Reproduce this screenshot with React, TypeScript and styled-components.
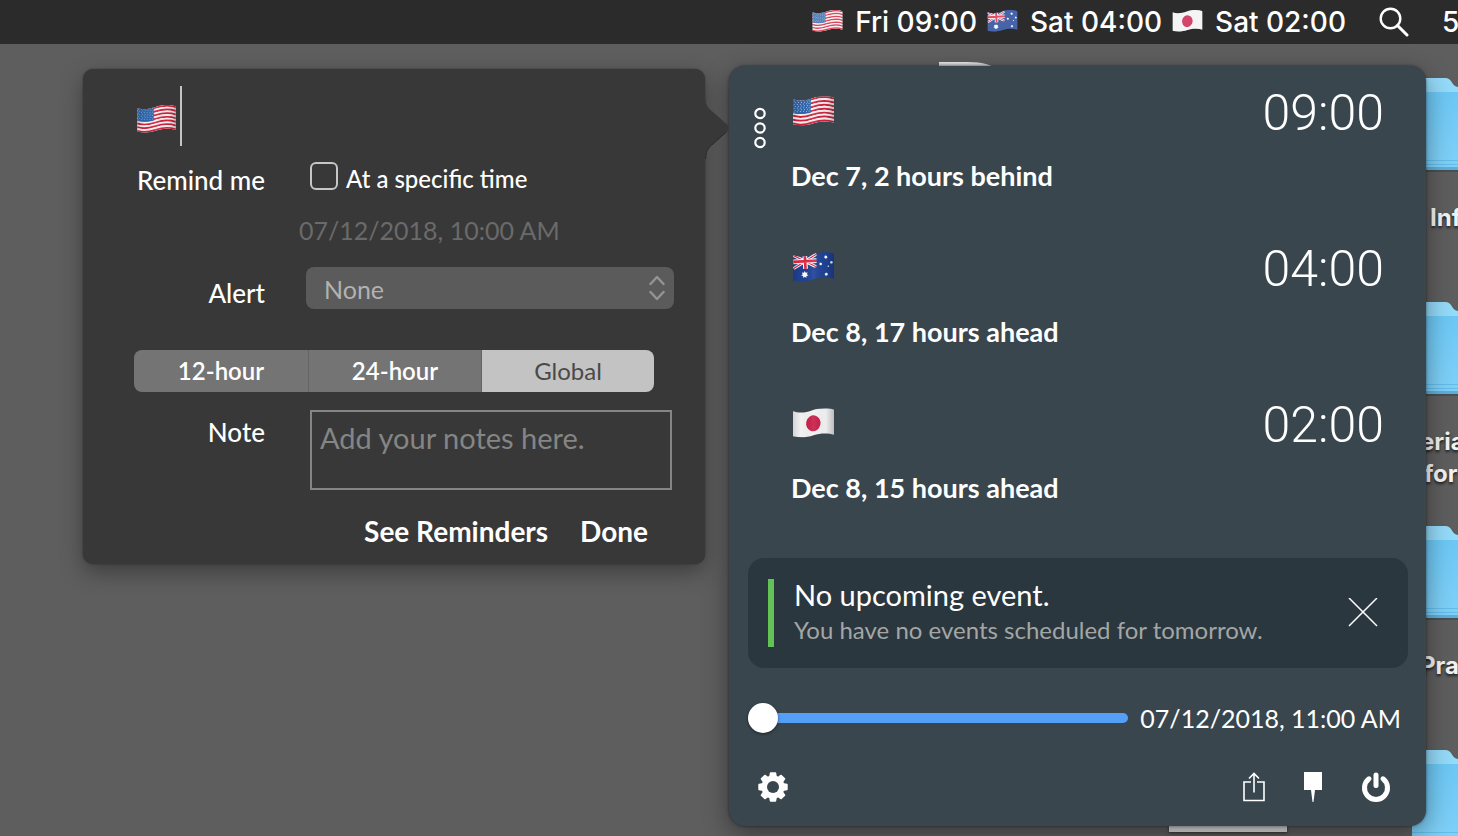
import React, { useId, useState } from "react";
import styled, { createGlobalStyle } from "styled-components";

const GlobalStyle = createGlobalStyle`
  *, *::before, *::after { box-sizing: border-box; }
  body {
    margin: 0;
    overflow: hidden;
    background: #5e5e5e;
    color: #fff;
    font-family: Lato, "Noto Sans", sans-serif;
    font-size: 25px;
    line-height: 32px;
  }
  button, input, select, textarea { font: inherit; color: inherit; }
`;

const Page = styled.div`
  position: relative;
  min-height: 100vh;
  overflow: hidden;
  background: #5e5e5e;
`;

/* Menu bar */

const MenuBar = styled.header`
  position: relative;
  display: flex;
  justify-content: flex-end;
  align-items: center;
  height: 44px;
  background: #2b2b2b;
  font-family: Inter, "Liberation Sans", sans-serif;
  font-size: 28px;
  font-weight: 500;
  white-space: nowrap;
`;

const MenuClock = styled.span`
  display: flex;
  align-items: center;
  gap: 12px;
  margin-right: 10px;
  svg { margin-bottom: 3px; }
`;

const SearchButton = styled.button`
  display: flex;
  margin: 0 33px 0 23px;
  padding: 0;
  border: 0;
  background: none;
`;

const MenuCut = styled.span`
  width: 16px;
  overflow: hidden;
`;

/* Desktop */

const Desktop = styled.div`
  position: absolute;
  inset: 0;
`;

const DesktopFolder = styled.div<{ $top: number }>`
  position: absolute;
  top: ${(p) => p.$top}px;
  left: calc(100% - 46px);
  svg { display: block; }
`;

const DesktopLabel = styled.span<{ $top: number; $right: number }>`
  position: absolute;
  top: ${(p) => p.$top}px;
  left: calc(100% - ${(p) => p.$right}px);
  font-family: Inter, "Noto Sans", sans-serif;
  font-size: 24px;
  font-weight: 700;
  color: #f2f2f2;
  text-shadow: 0 2px 3px rgba(0, 0, 0, 0.7);
`;

const PaperTop = styled.div`
  position: absolute;
  top: 62px;
  left: calc(100% - 519px);
  width: 56px;
  height: 12px;
  border-radius: 0 28px 0 0 / 0 8px 0 0;
  background: linear-gradient(#eee, #bbb 5px);
`;

const PaperBottom = styled.div`
  position: absolute;
  top: 800px;
  left: calc(100% - 289px);
  width: 118px;
  height: 32px;
  background: #dcdcdc;
  box-shadow: 0 1px 3px rgba(0, 0, 0, 0.5);
`;

const Windows = styled.main`
  position: relative;
  display: flex;
  justify-content: flex-end;
  align-items: flex-start;
  gap: 24px;
  padding: 22px 32px 10px;
`;

/* Reminder popover */

const Popover = styled.form`
  position: relative;
  z-index: 1;
  flex: 0 1 622px;
  display: flex;
  flex-direction: column;
  margin-top: 3px;
  padding: 17px 31px 13px 51px;
  border-radius: 10px;
  background: #383838;
  box-shadow: 0 0 2px rgba(0, 0, 0, 0.4), 0 8px 22px rgba(0, 0, 0, 0.35);
`;

const PopoverArrow = styled.svg`
  position: absolute;
  top: 28px;
  left: 100%;
`;

const TitleRow = styled.label`
  display: flex;
  align-items: center;
  height: 60px;
  padding: 6px 0 0 3px;
`;

const Caret = styled.span`
  align-self: stretch;
  width: 2px;
  margin: -6px 0 0 4px;
  background: #c4c4c4;
`;

const TitleInput = styled.input`
  flex: 1;
  min-width: 0;
  border: 0;
  outline: 0;
  background: none;
`;

const Row = styled.div<{ $top: number }>`
  display: flex;
  gap: 41px;
  margin-top: ${(p) => p.$top}px;
`;

const RowLabel = styled.label<{ $pad?: number }>`
  flex: 0 0 131px;
  padding-top: ${(p) => p.$pad ?? 0}px;
  font-size: 26px;
  font-weight: 500;
  text-align: right;
  white-space: nowrap;
`;

const CheckLabel = styled.label`
  display: flex;
  align-items: center;
  gap: 8px;
  padding-left: 4px;
  font-size: 24px;
  font-weight: 500;
  white-space: nowrap;
`;

const Checkbox = styled.input`
  appearance: none;
  width: 28px;
  height: 28px;
  margin: 0 0 6px;
  border: 2px solid #c6c6c6;
  border-radius: 6px;
`;

const DateText = styled.time`
  margin: 18px 0 0 165px;
  color: #6a6a6a;
`;

const SelectBox = styled.div`
  position: relative;
  flex: 1;
  svg { position: absolute; right: 9px; top: 8px; pointer-events: none; }
`;

const Select = styled.select`
  appearance: none;
  display: block;
  width: 100%;
  height: 42px;
  padding: 2px 18px 0;
  border: 0;
  border-radius: 8px;
  background: #5b5b5b;
  color: #b2b2b2;
`;

const Segments = styled.div`
  display: grid;
  grid-template-columns: 175px 173px 172px;
  width: 520px;
  margin-top: 41px;
  border-radius: 8px;
  overflow: hidden;
`;

const Segment = styled.button<{ $on: boolean }>`
  height: 42px;
  padding: 0;
  border: 0;
  border-right: ${(p) => (p.$on ? "0" : "1px solid #646464")};
  background: ${(p) => (p.$on ? "#c3c3c3" : "#747474")};
  color: ${(p) => (p.$on ? "#4a4a4a" : "#fff")};
  font-size: 24px;
  font-weight: ${(p) => (p.$on ? 400 : 600)};
`;

const Notes = styled.textarea`
  flex: 1;
  min-width: 0;
  height: 80px;
  margin: 0 2px 0 4px;
  padding: 10px 8px;
  border: 2px solid #858585;
  background: none;
  resize: none;
  outline: 0;
  font-size: 29px;
  &::placeholder { color: #858585; opacity: 1; }
`;

const Actions = styled.div`
  display: flex;
  justify-content: flex-end;
  gap: 32px;
  margin-top: 21px;
  padding-right: 26px;
`;

const TextButton = styled.button`
  height: 40px;
  padding: 0;
  border: 0;
  background: none;
  font-size: 28px;
  font-weight: 700;
  white-space: nowrap;
`;

/* World clock panel */

const Panel = styled.section`
  flex: 0 1 697px;
  display: flex;
  flex-direction: column;
  border-radius: 16px;
  background: #39464e;
  box-shadow: 0 0 3px rgba(0, 0, 0, 0.5), 0 8px 26px rgba(0, 0, 0, 0.4);
`;

const ClockRow = styled.article`
  display: flex;
  height: 156px;
  padding-right: 42px;
`;

const HandleSlot = styled.div`
  flex: 0 0 62px;
  padding: 41px 0 0 24px;
`;

const IconButton = styled.button`
  display: flex;
  padding: 0;
  border: 0;
  background: none;
`;

const ClockBody = styled.div`
  flex: 1;
`;

const ClockHead = styled.div`
  display: flex;
  justify-content: space-between;
  align-items: center;
  height: 94px;
  padding-left: 2px;
  svg { margin-bottom: 4px; }
`;

const BigTime = styled.time`
  font-family: Roboto, "Open Sans", sans-serif;
  font-size: 50px;
  font-weight: 300;
  line-height: 60px;
`;

const Offset = styled.p`
  margin: 0;
  font-size: 27px;
  font-weight: 700;
`;

const EventCard = styled.section`
  display: flex;
  align-items: center;
  margin: 24px 18px 0 19px;
  height: 110px;
  padding: 0 30px 0 20px;
  border-radius: 16px;
  background: #2b373e;
`;

const EventBar = styled.span`
  width: 6px;
  height: 68px;
  margin-right: 20px;
  background: #63c255;
`;

const EventText = styled.div`
  flex: 1;
  padding-bottom: 4px;
`;

const EventTitle = styled.h2`
  margin: 0;
  font-size: 29px;
  font-weight: 400;
  line-height: 38px;
`;

const EventNote = styled.p`
  margin: 0;
  color: #a3a6a5;
  font-size: 24px;
`;

const SliderRow = styled.div`
  display: flex;
  align-items: center;
  justify-content: space-between;
  gap: 10px;
  height: 40px;
  margin: 30px 25px 0 19px;
  white-space: nowrap;
`;

const Slider = styled.input`
  appearance: none;
  flex: 0 1 380px;
  height: 30px;
  margin: 0;
  background: none;
  &::-webkit-slider-runnable-track {
    height: 10px;
    border-radius: 5px;
    background: #559ff6;
  }
  &::-webkit-slider-thumb {
    appearance: none;
    width: 30px;
    height: 30px;
    margin-top: -10px;
    border-radius: 50%;
    background: #fff;
    box-shadow: 0 1px 3px rgba(0, 0, 0, 0.5);
  }
`;

const Toolbar = styled.footer`
  display: flex;
  align-items: center;
  justify-content: space-between;
  height: 42px;
  margin: 28px 35px 18px 29px;
`;

const ToolGroup = styled.div`
  display: flex;
  align-items: center;
  gap: 38px;
`;

/* Drawings */

type Country = "us" | "au" | "jp";

const WAVE = "C7 5.5 13 4 19 2 C26 -0.3 34 -0.6 40 1.5";

function Stars({ points }: { points: [number, number, number][] }) {
  return (
    <>
      {points.map(([x, y, r]) => (
        <path
          key={`${x}-${y}`}
          fill="#fff"
          transform={`translate(${x} ${y}) scale(${r})`}
          d="M0-1 .25-.5.8-.62.55-.12 1 .22.45.35.43.9 0 .55-.43.9-.45.35-1 .22-.55-.12-.8-.62-.25-.5Z"
        />
      ))}
    </>
  );
}

function Flag({ country, width = 41, faded = false }: { country: Country; width?: number; faded?: boolean }) {
  const id = useId().replace(/[^a-zA-Z0-9]/g, "");
  const stripes = Array.from({ length: 13 }, (_, i) => i);
  return (
    <svg
      width={width}
      height={Math.round(width * 0.72)}
      viewBox="0 0 40 29"
      role="img"
      aria-label={country}
    >
      <defs>
        <clipPath id={`c${id}`}>
          <path d={`M0 3 ${WAVE} V26 C34 24 26 24.5 20 26.5 C13 28.8 7 29 0 27.5Z`} />
        </clipPath>
        <linearGradient id={`g${id}`}>
          <stop offset="0" stopColor="#000" stopOpacity=".12" />
          <stop offset=".2" stopColor="#000" stopOpacity="0" />
          <stop offset=".5" stopColor="#fff" stopOpacity=".08" />
          <stop offset=".8" stopColor="#000" stopOpacity=".02" />
          <stop offset="1" stopColor="#000" stopOpacity=".22" />
        </linearGradient>
      </defs>
      <g clipPath={`url(#c${id})`}>
        {country === "us" && (
          <>
            <rect width="40" height="29" fill="#f4f1f2" />
            {stripes.map((i) => (
              <path
                key={i}
                d={`M0 3 ${WAVE}`}
                transform={`translate(0 ${0.95 + i * 1.9})`}
                fill="none"
                stroke={i % 2 ? "#f4f1f2" : "#d3213c"}
                strokeWidth="1.95"
              />
            ))}
            <path d="M0 0 H17.5 V16 C12 17.6 7 18 0 16.6Z" fill="#2f66ab" />
            {stripes.slice(0, 7).map((r) =>
              [1.5, 4.5, 7.5, 10.5, 13.5, 16].map((x) => (
                <circle
                  key={`${r}-${x}`}
                  cx={x + (r % 2 ? 0.7 : -0.3)}
                  cy={4.8 + r * 1.8 - x * 0.07}
                  r=".5"
                  fill="#b9d0ea"
                />
              )),
            )}
          </>
        )}
        {country === "au" && (
          <>
            <rect width="40" height="29" fill="#1e4294" />
            <g transform="translate(0 3) rotate(-3)">
              <path d="M0 0 23 13M23 0 0 13" stroke="#fff" strokeWidth="3" />
              <path d="M0 0 23 13M23 0 0 13" stroke="#dc2a45" strokeWidth="1.2" />
              <path d="M11.5-2V14M0 6.5H23" stroke="#fff" strokeWidth="4.6" />
              <path d="M11.5-2V14M0 6.5H23" stroke="#dc2a45" strokeWidth="2.6" />
            </g>
            <path d="M23 0H40V29H0V17.5C8 19 15 17 23 14.5Z" fill="#1e4294" />
            <Stars
              points={[
                [11.5, 22, 3.6],
                [32, 4.8, 1.9],
                [27, 11.5, 1.7],
                [37.5, 10, 1.7],
                [34.5, 13.7, 1],
                [32.5, 21.5, 1.9],
              ]}
            />
          </>
        )}
        {country === "jp" && (
          <>
            <rect width="40" height="29" fill="#f3f2f2" />
            <ellipse cx="19.8" cy="14.8" rx="7" ry="7.8" fill="#c91f49" transform="rotate(12 19.8 14.8)" />
          </>
        )}
        <rect width="40" height="29" fill={faded ? "rgba(255,255,255,.18)" : `url(#g${id})`} />
      </g>
    </svg>
  );
}

function Folder() {
  const id = useId().replace(/[^a-zA-Z0-9]/g, "");
  return (
    <svg width="128" height="96" viewBox="0 0 128 96" aria-hidden="true">
      <defs>
        <linearGradient id={id} x1="0" y1="0" x2="0" y2="1">
          <stop offset="0" stopColor="#6cc7f4" />
          <stop offset="1" stopColor="#80d1f8" />
        </linearGradient>
      </defs>
      <path d="M3 0H34C40 0 40 9 46 9H122Q126 9 126 12V92H0V4Q0 0 3 0Z" fill="#94daf9" />
      <path d="M0 14H126V92H0Z" fill={`url(#${id})`} />
      <path d="M0 82.500H126M0 86.500H126" stroke="#65bce8" />
      <path d="M0 90.500H126" stroke="#59b0dd" strokeWidth="3" />
      <path d="M0 93H126" stroke="#444" strokeWidth="2" opacity=".6" />
    </svg>
  );
}

const Gear = () => (
  <svg width="30" height="30" viewBox="0 0 30 30" aria-hidden="true">
    <g fill="#fff">
      {[0, 45, 90, 135].map((a) => (
        <path key={a} d="M11.800 1Q11.900.3 12.600.3H17.400Q18.100.3 18.200 1L18.900 5V25L18.200 29Q18.100 29.700 17.400 29.700H12.600Q11.900 29.700 11.800 29L11.100 25V5Z" transform={`rotate(${a} 15 15)`} />
      ))}
      <circle cx="15" cy="15" r="11.500" />
    </g>
    <circle cx="15" cy="15" r="6" fill="#39464e" />
  </svg>
);

const clocks: { country: Country; menu: string; time: string; offset: string }[] = [
  { country: "us", menu: "Fri 09:00", time: "09:00", offset: "Dec 7, 2 hours behind" },
  { country: "au", menu: "Sat 04:00", time: "04:00", offset: "Dec 8, 17 hours ahead" },
  { country: "jp", menu: "Sat 02:00", time: "02:00", offset: "Dec 8, 15 hours ahead" },
];

const formats = ["12-hour", "24-hour", "Global"];

export default function App() {
  const [format, setFormat] = useState("Global");

  return (
    <Page>
      <GlobalStyle />
      <Desktop>
        <PaperTop />
        <PaperBottom />
        {[78, 302, 526, 750].map((top) => (
          <DesktopFolder key={top} $top={top}>
            <Folder />
          </DesktopFolder>
        ))}
        <DesktopLabel $top={202} $right={28}>Inf</DesktopLabel>
        <DesktopLabel $top={426} $right={38}>eria</DesktopLabel>
        <DesktopLabel $top={458} $right={34}>for</DesktopLabel>
        <DesktopLabel $top={650} $right={38}>Pra</DesktopLabel>
      </Desktop>

      <MenuBar>
        {clocks.map((c) => (
          <MenuClock key={c.country}>
            <Flag country={c.country} width={31} faded />
            {c.menu}
          </MenuClock>
        ))}
        <SearchButton type="button" aria-label="Search">
          <svg width="30" height="30" viewBox="0 0 30 30" fill="none" stroke="#fff" strokeWidth="2.400">
            <circle cx="11.500" cy="11.500" r="9.800" />
            <path d="M18.500 18.500 28 28" strokeWidth="3" strokeLinecap="round" />
          </svg>
        </SearchButton>
        <MenuCut>5</MenuCut>
      </MenuBar>

      <Windows>
        <Popover onSubmit={(e) => e.preventDefault()}>
          <PopoverArrow width="25" height="62" viewBox="0 0 25 62" aria-hidden="true">
            <path d="M-1 0H0C0 8 4 12 8 15L22 27.500Q26 31 22 34.500L8 47C4 50 0 54 0 62H-1Z" fill="#383838" />
            <path d="M22 34.500 8 47C4 50 .5 54 .5 62" fill="none" stroke="#2a2a2a" />
          </PopoverArrow>
          <TitleRow>
            <Flag country="us" width={39} />
            <Caret />
            <TitleInput aria-label="Reminder title" />
          </TitleRow>
          <Row $top={15}>
            <RowLabel as="span" $pad={3}>Remind me</RowLabel>
            <CheckLabel>
              <Checkbox type="checkbox" />
              At a specific time
            </CheckLabel>
          </Row>
          <DateText>07/12/2018, 10:00 AM</DateText>
          <Row $top={21}>
            <RowLabel htmlFor="alert" $pad={10}>Alert</RowLabel>
            <SelectBox>
              <Select id="alert">
                <option>None</option>
              </Select>
              <svg width="16" height="26" viewBox="0 0 16 26" fill="none" stroke="#949494" strokeWidth="2.400" strokeLinecap="round" strokeLinejoin="round" aria-hidden="true">
                <path d="M1.500 9 8 2 14.500 9M1.500 17 8 24 14.500 17" />
              </svg>
            </SelectBox>
          </Row>
          <Segments role="group" aria-label="Time format">
            {formats.map((f) => (
              <Segment key={f} type="button" $on={f === format} onClick={() => setFormat(f)}>
                {f}
              </Segment>
            ))}
          </Segments>
          <Row $top={18}>
            <RowLabel htmlFor="note" $pad={6}>Note</RowLabel>
            <Notes id="note" placeholder="Add your notes here." />
          </Row>
          <Actions>
            <TextButton type="button">See Reminders</TextButton>
            <TextButton type="submit">Done</TextButton>
          </Actions>
        </Popover>

        <Panel>
          {clocks.map((c, i) => (
            <ClockRow key={c.country}>
              <HandleSlot>
                {i === 0 && (
                  <IconButton type="button" aria-label="Clock options">
                    <svg width="14" height="42" viewBox="0 0 14 42" fill="none" stroke="#fff" strokeWidth="2.200">
                      <circle cx="7" cy="6.500" r="4.700" />
                      <circle cx="7" cy="21" r="4.700" />
                      <circle cx="7" cy="35.500" r="4.700" />
                    </svg>
                  </IconButton>
                )}
              </HandleSlot>
              <ClockBody>
                <ClockHead>
                  <Flag country={c.country} />
                  <BigTime>{c.time}</BigTime>
                </ClockHead>
                <Offset>{c.offset}</Offset>
              </ClockBody>
            </ClockRow>
          ))}
          <EventCard>
            <EventBar />
            <EventText>
              <EventTitle>No upcoming event.</EventTitle>
              <EventNote>You have no events scheduled for tomorrow.</EventNote>
            </EventText>
            <IconButton type="button" aria-label="Dismiss">
              <svg width="30" height="30" viewBox="0 0 30 30" stroke="#fff" strokeWidth="1.500">
                <path d="M1 0 29 28M29 0 1 28" />
              </svg>
            </IconButton>
          </EventCard>
          <SliderRow>
            <Slider type="range" min={0} max={100} defaultValue={0} aria-label="Time offset" />
            <time>07/12/2018, 11:00 AM</time>
          </SliderRow>
          <Toolbar>
            <IconButton type="button" aria-label="Settings">
              <Gear />
            </IconButton>
            <ToolGroup>
              <IconButton type="button" aria-label="Share">
                <svg width="22" height="30" viewBox="0 0 22 30" fill="none" stroke="#fff" strokeWidth="1.600">
                  <path d="M8 10H1V28.500H21V10H14M11 20.500V1.500M6 6.500 11 1.500 16 6.500" />
                </svg>
              </IconButton>
              <IconButton type="button" aria-label="Pin">
                <svg width="20" height="30" viewBox="0 0 20 30" fill="#fff">
                  <path d="M1 0H19V18H12L10.500 30H9.500L8 18H1Z" />
                </svg>
              </IconButton>
              <IconButton type="button" aria-label="Quit">
                <svg width="30" height="30" viewBox="0 0 30 30" fill="none" stroke="#fff" strokeLinecap="round">
                  <path d="M8 6.800A11.500 11.500 0 1 0 22 6.800" strokeWidth="5" />
                  <path d="M15 3V13.500" strokeWidth="5" />
                </svg>
              </IconButton>
            </ToolGroup>
          </Toolbar>
        </Panel>
      </Windows>
    </Page>
  );
}
